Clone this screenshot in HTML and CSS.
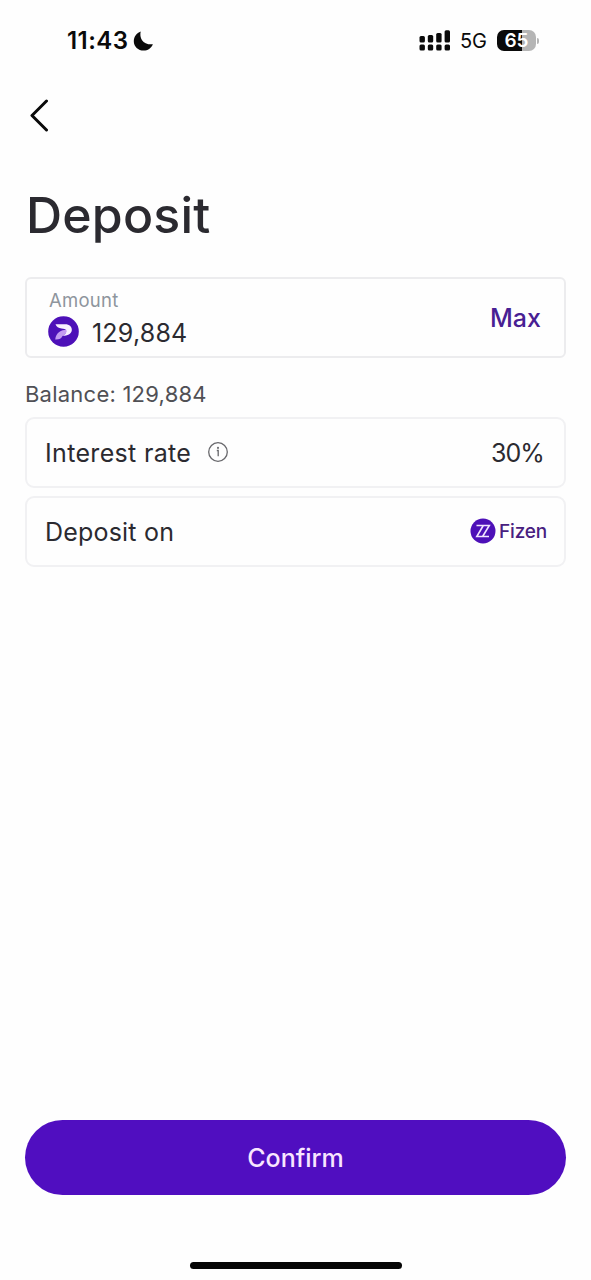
FILE: index.html
```html
<!DOCTYPE html>
<html lang="en">
<head>
<meta charset="utf-8">
<title>Deposit</title>
<link rel="stylesheet" href="styles.css">
</head>
<body>
<div class="screen">
  <header class="status">
    <div class="status-left">
      <span class="time">11:43</span>
      <svg class="moon" width="21" height="20" viewBox="0 0 20 20"><path d="M7.200 0.400C5.700 6.600 9 14 19.400 13.300C17.600 17.400 14.200 19.600 10.200 19.600C4.700 19.600 0.300 15.600 0.300 10.200C0.300 5.700 3.200 1.900 7.200 0.400Z" fill="#0a0a0a"/></svg>
    </div>
    <div class="status-right">
      <svg width="32" height="22" viewBox="0 0 32 22" fill="#0a0a0a">
        <rect x="0.500" y="6" width="5.400" height="6.500" rx="1.500"/><rect x="8.800" y="5" width="5.400" height="7.500" rx="1.500"/><rect x="17.200" y="3" width="5.400" height="9.500" rx="1.500"/><rect x="25.600" y="0.300" width="5.400" height="12.200" rx="1.500"/>
        <rect x="0.500" y="14.500" width="5.400" height="6" rx="1.500"/><rect x="8.800" y="14.500" width="5.400" height="6" rx="1.500"/><rect x="17.200" y="14.500" width="5.400" height="6" rx="1.500"/><rect x="25.600" y="14.500" width="5.400" height="6" rx="1.500"/>
      </svg>
      <span class="network">5G</span>
      <span class="battery">65</span>
      <span class="battery-tip"></span>
    </div>
  </header>

  <nav class="nav">
    <svg width="22" height="34" viewBox="0 0 22 34" fill="none" stroke="#0a0a0a" stroke-width="3" stroke-linecap="round" stroke-linejoin="round"><path d="M17.500 3L3 17.500L17.500 32"/></svg>
  </nav>

  <h1 class="title">Deposit</h1>

  <section class="amount-card">
    <div>
      <div class="label">Amount</div>
      <div class="amount-row">
        <svg width="31" height="31" viewBox="0 0 31 31">
          <circle cx="15.500" cy="15.500" r="15.300" fill="#4d10b8"/>
          <path d="M7.500 8.300H17C21.500 8.300 24.300 11 23.800 14.500C23.200 18 19.500 19.800 14.800 20C17 18.500 18.500 16.500 18.200 14.700C17.800 12.900 15.500 12.900 13.500 12.600C10.500 12.200 8.500 11 7.500 8.300Z" fill="#f8efff"/>
          <path d="M18.200 13.700C13.500 13.700 8 16.500 7.200 23.500C11 23.700 13.500 22.500 14.500 20C17.500 18.800 19 16.300 18.200 13.700Z" fill="#c39af0"/>
        </svg>
        <span class="amount">129,884</span>
      </div>
    </div>
    <span class="max">Max</span>
  </section>

  <p class="balance">Balance: 129,884</p>

  <section class="row-card">
    <span class="row-label interest">Interest rate</span>
    <svg class="info" width="22" height="22" viewBox="0 0 22 22" fill="none" stroke="#68686c" stroke-width="1.300"><circle cx="11" cy="11" r="9.300"/><path d="M9.800 9.500H11.200V15.300"/><circle cx="11" cy="6.900" r="0.400"/></svg>
    <span class="rate">30%</span>
  </section>

  <section class="row-card">
    <span class="row-label">Deposit on</span>
    <span class="brand">
      <svg width="26" height="26" viewBox="0 0 26 26"><circle cx="13" cy="13" r="12.500" fill="#4d10b8"/><path d="M6.500 7.500H19.300L12.600 18.500M19 18.500H6.800L13.300 7.500" fill="none" stroke="#f1e4ff" stroke-width="1.600"/></svg>
      <span class="brand-name">Fizen</span>
    </span>
  </section>

  <button class="confirm">Confirm</button>
  <div class="home-bar"></div>
</div>
</body>
</html>
```

FILE: styles.css
```css
* { box-sizing: border-box; }
body { margin: 0; background: #fefefe; }
.screen {
  width: 591px;
  height: 1280px;
  padding: 0 25px;
  display: flex;
  flex-direction: column;
  font-family: Inter, "Liberation Sans", sans-serif;
  color: #2b2a30;
  background: #fefefe;
}
.status {
  height: 81px;
  padding: 0 27px 0 42px;
  display: flex;
  align-items: center;
  justify-content: space-between;
  color: #0a0a0a;
}
.status-left, .status-right { display: flex; align-items: center; }
.time { font-size: 24px; font-weight: 600; line-height: 26px; letter-spacing: 0.45px; }
.moon { margin-left: 5px; }
.network { margin-left: 9px; font-size: 20px; line-height: 24px; }
.battery {
  margin-left: 10px;
  width: 39px;
  height: 21px;
  border-radius: 7px;
  background: linear-gradient(90deg, #0a0a0a 65%, #b5b5b5 65%);
  color: #fff;
  font-size: 19px;
  font-weight: 600;
  line-height: 21px;
  text-align: center;
}
.battery-tip { margin-left: 1px; width: 2px; height: 6px; border-radius: 0 2px 2px 0; background: #b5b5b5; }
.nav { height: 69px; padding: 0 0 2px 4px; display: flex; align-items: center; }
.title { margin: 35px 0 0 1px; font-size: 50px; line-height: 60px; font-weight: 500; letter-spacing: 0.2px; }
.amount-card {
  margin-top: 32px;
  height: 81px;
  padding: 10px 23px 0 22px;
  border: 2px solid #ececee;
  border-radius: 6px;
  display: flex;
  justify-content: space-between;
}
.label { font-size: 18.5px; line-height: 22px; letter-spacing: 0.25px; color: #8e959d; }
.amount-row { display: flex; align-items: center; gap: 13px; margin: 5px 0 0 -1px; }
.amount-row svg { margin-top: -3px; }
.amount { font-size: 25px; line-height: 33px; letter-spacing: 0.2px; padding-top: 1px; }
.max { margin-top: 14px; font-size: 25px; line-height: 30px; font-weight: 450; letter-spacing: 0; color: #482093; }
.balance { margin: 23px 0 9px; font-size: 22px; line-height: 27px; letter-spacing: 0.23px; color: #505055; }
.row-card {
  height: 71px;
  margin-bottom: 8px;
  padding: 0 18px;
  border: 2px solid #f1f1f3;
  border-radius: 9px;
  display: flex;
  align-items: center;
}
.row-label, .rate { font-size: 25px; line-height: 30px; letter-spacing: 0.2px; }
.interest { letter-spacing: 0.33px; }
.info { margin: -1px 0 0 16px; }
.rate { margin-left: auto; margin-right: 2px; letter-spacing: -0.9px; }
.brand { margin-left: auto; margin-right: -1px; display: flex; align-items: center; gap: 3px; }
.brand svg { margin-top: -1px; }
.brand-name { font-size: 19px; line-height: 24px; font-weight: 450; letter-spacing: -0.2px; color: #482080; }
.confirm {
  margin-top: auto;
  height: 75px;
  border: 0;
  border-radius: 38px;
  background: #500ec0;
  color: #f9e6ff;
  font: 450 25px/30px Inter, "Liberation Sans", sans-serif;
}
.home-bar { align-self: center; width: 212px; height: 7px; margin: 67px 0 11px; border-radius: 4px; background: #050505; }
```
